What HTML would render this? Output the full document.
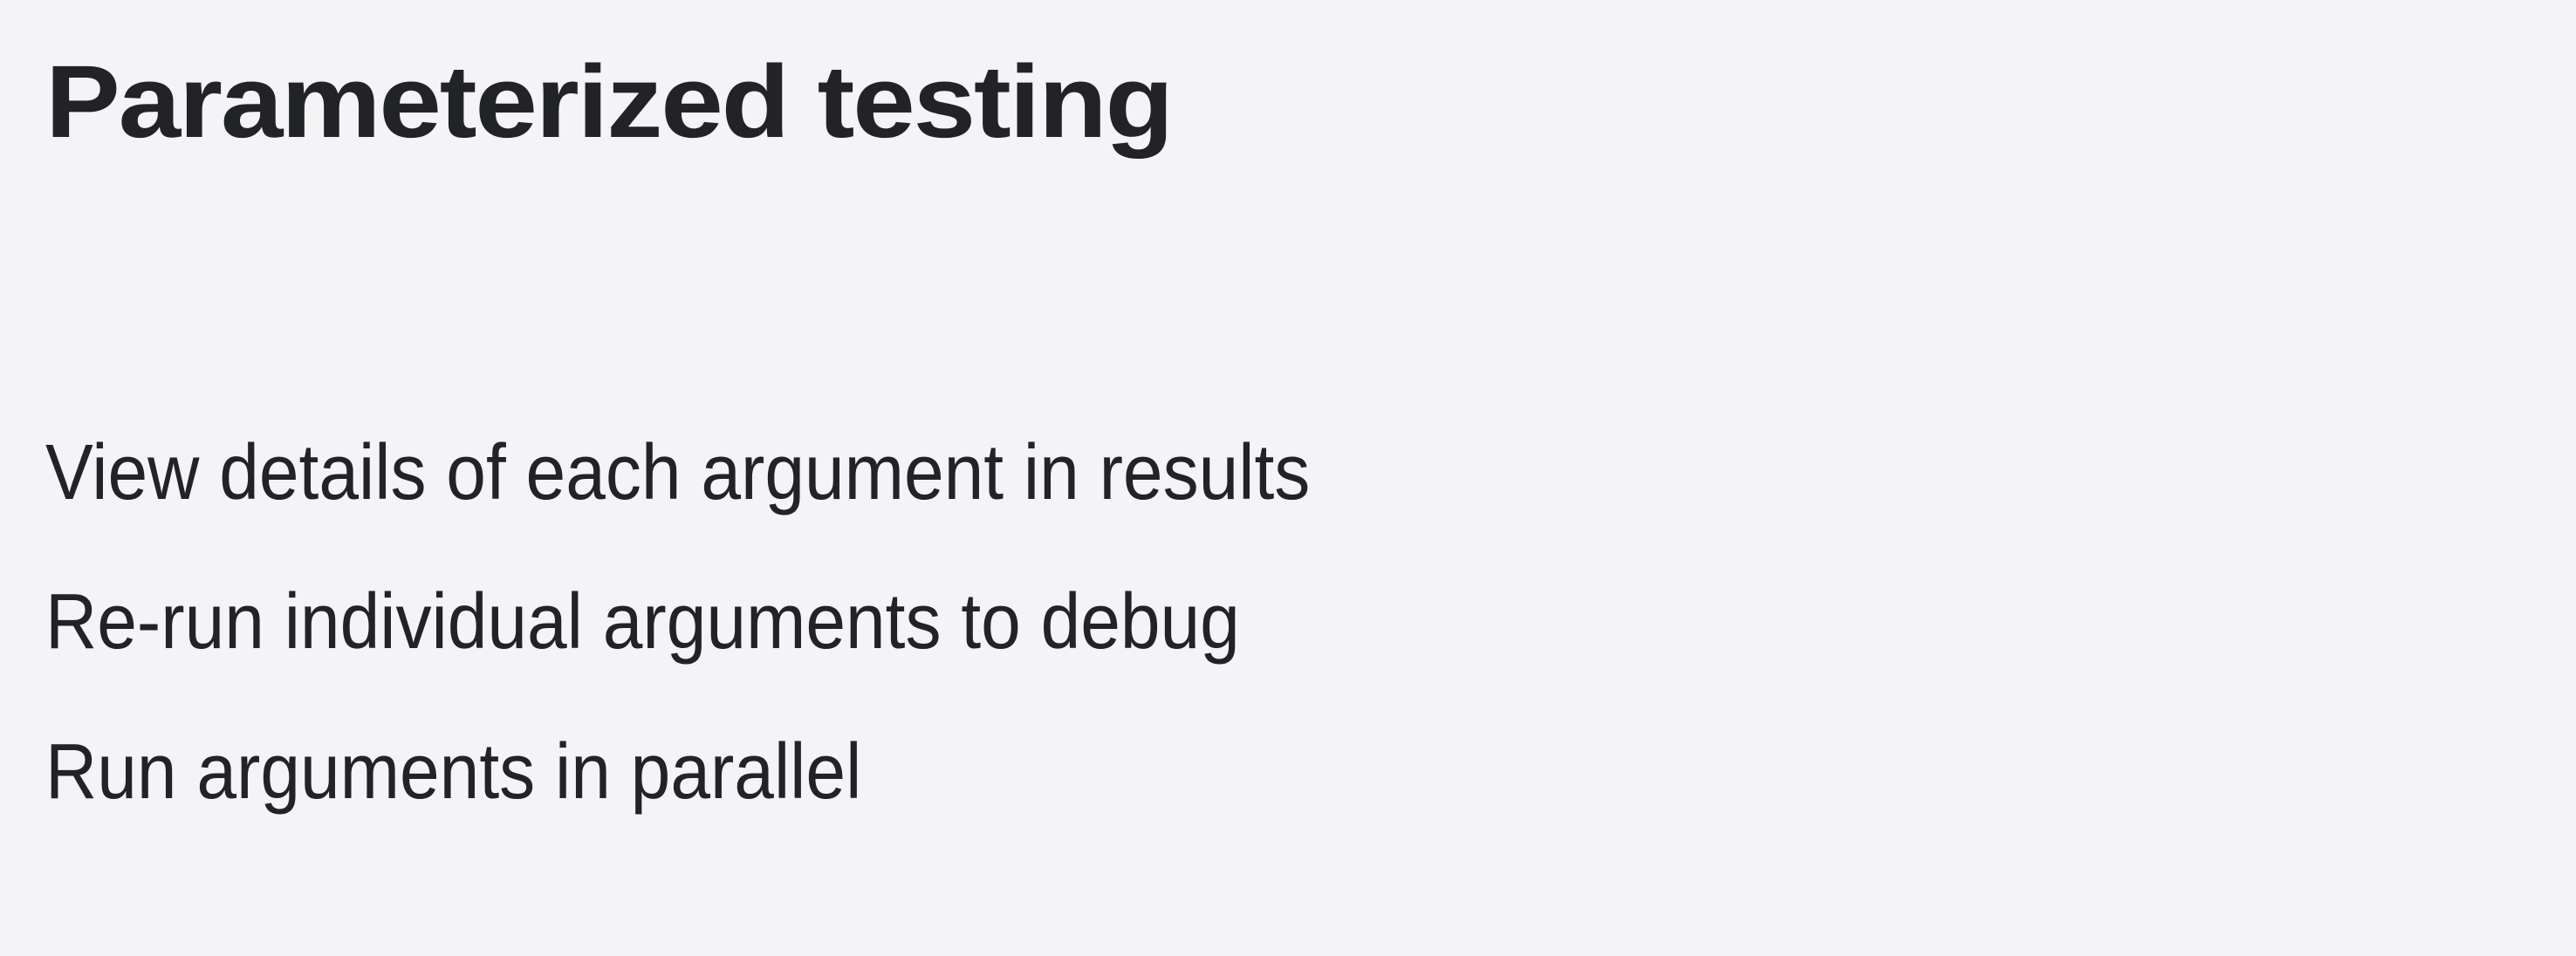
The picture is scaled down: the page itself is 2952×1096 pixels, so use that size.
<!DOCTYPE html>
<html><head><style>
html,body{margin:0;padding:0;width:2952px;height:1096px;background:#f4f4f6;overflow:hidden}
body{font-family:"Liberation Sans",sans-serif;color:#222326;position:relative}
.t{position:absolute;left:52px;top:58px;font-size:118px;font-weight:bold;line-height:1;white-space:nowrap;letter-spacing:-2px;transform-origin:0 0;transform:scaleX(1.09)}
.b{position:absolute;left:52px;font-size:90px;line-height:1;white-space:nowrap;transform-origin:0 0;transform:scaleX(0.912)}
</style></head><body>
<div class="t">Parameterized testing</div>
<div class="b" style="top:497px">View details of each argument in results</div>
<div class="b" style="top:668px">Re-run individual arguments to debug</div>
<div class="b" style="top:840px">Run arguments in parallel</div>
</body></html>
